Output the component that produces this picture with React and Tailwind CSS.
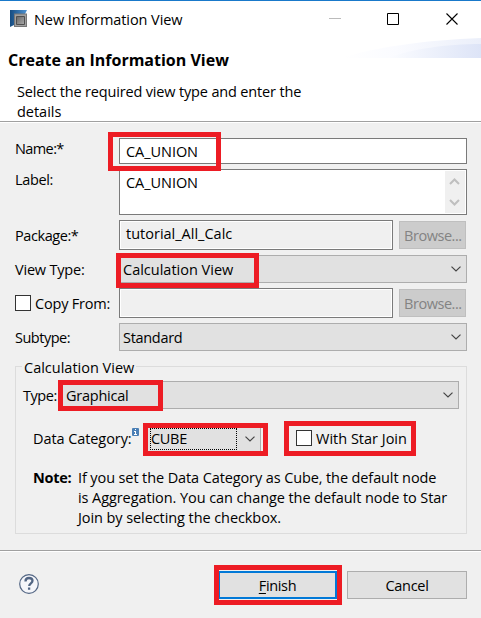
import React from "react";

function Text({ className = "", children }) {
  return (
    <span className={`block h-[20px] whitespace-pre leading-[22px] ${className}`}>{children}</span>
  );
}

function Chevron({ className = "" }) {
  return (
    <svg className={`shrink-0 ${className}`} width="10" height="6" viewBox="0 0 10 6" fill="none">
      <path d="M.5 .6 5 5 9.500 .6" stroke="#444" strokeWidth="1.2" />
    </svg>
  );
}

function Combo({ className = "", children }) {
  return (
    <div className={`flex h-[28px] items-center justify-between border border-[#adadad] bg-[#e1e1e1] pl-[3px] pr-[5px] ${className}`}>
      {children}
      <Chevron />
    </div>
  );
}

function Browse() {
  return (
    <div className="mt-px ml-[6px] h-[28px] w-[67px] border border-[#bfbfbf] bg-[#cccccc] pt-[3px] pl-[4px] text-[#838383]">
      <Text className="tracking-[-0.45px]">Browse...</Text>
    </div>
  );
}

function Highlight({ className }) {
  return <div className={`pointer-events-none absolute border-[5px] border-[#ed1c24] ${className}`} />;
}

function Label({ className = "", children }) {
  return (
    <div className={`w-[104px] shrink-0 ${className}`}>
      <Text>{children}</Text>
    </div>
  );
}

function Check() {
  return <span className="block size-[16px] shrink-0 border border-[#333] bg-white" />;
}

export default function App() {
  return (
    <div className="relative flex h-[618px] w-[481px] flex-col overflow-hidden bg-[#f0f0f0] font-['Open_Sans','Noto_Sans',sans-serif] text-[14.5px] text-black">
      <header className="h-[122px] border-t border-b border-t-[#1979ca] border-b-[#a0a0a0] bg-white">
        <div className="flex h-[37px] items-start">
          <svg className="mt-[9px] ml-[10px]" width="17" height="17" viewBox="0 0 17 17">
            <defs>
              <linearGradient id="blue" x1="0" y1="0" x2="1" y2="0">
                <stop offset="0" stopColor="#164c80" />
                <stop offset="1" stopColor="#4f94d4" />
              </linearGradient>
              <linearGradient id="metal" x1="0" y1="0" x2="1" y2="1">
                <stop offset="0" stopColor="#666" />
                <stop offset="1" stopColor="#aaa" />
              </linearGradient>
            </defs>
            <path d="M0 0h17l-2 4H4v11l-4 2Z" fill="url(#blue)" />
            <path d="M4 3.500h13V17H4Z" fill="#777" />
            <path d="M5 4.500h11V16H5Z" fill="#a0a0a0" />
            <path d="M6.500 6.500h8v8h-8Z" fill="url(#metal)" stroke="#505050" />
          </svg>
          <Text className="mt-[8px] ml-[7px] w-[295px] tracking-[-0.07px]">New Information View</Text>
          <svg className="mt-[12px]" width="130" height="12" viewBox="0 0 130 12" fill="none">
            <path d="M0 5.500h12" stroke="#bbb" />
            <path d="M58.500 .5h11v11h-11Z" stroke="#000" />
            <path d="m117.500 .5 11 11m0-11-11 11" stroke="#000" strokeWidth="1.100" />
          </svg>
        </div>
        <div className="relative h-[83px]">
          <svg className="absolute top-0 right-0" width="140" height="20" viewBox="0 0 140 20">
            <defs>
              <linearGradient id="outerWave">
                <stop offset="0" stopColor="#fff" />
                <stop offset=".4" stopColor="#fafbff" />
                <stop offset="1" stopColor="#ebeffa" />
              </linearGradient>
              <linearGradient id="innerWave">
                <stop offset="0" stopColor="#fbfcff" />
                <stop offset="1" stopColor="#dde4f7" />
              </linearGradient>
            </defs>
            <path d="M0 20C35 9 85 2 140 0v20Z" fill="url(#outerWave)" />
            <path d="M48 20C70 11 105 6 140 6v14Z" fill="url(#innerWave)" />
          </svg>
          <div className="relative pt-[11px] pl-[8px]">
            <Text className="text-[16px] font-bold">Create an Information View</Text>
            <div className="pt-[12px] pl-[9px]">
              <Text className="tracking-[-0.16px]">Select the required view type and enter the</Text>
              <Text className="tracking-[-0.02px]">details</Text>
            </div>
          </div>
        </div>
      </header>

      <main className="h-[428px] border-t border-t-white pt-[15px] pl-[15px]">
        <div className="flex h-[31px]">
          <Label className="tracking-[-0.6px]">Name:*</Label>
          <div className="h-[26px] w-[348px] border border-[#7a7a7a] bg-white pt-[2px] pl-[6px]">
            <Text className="tracking-[-0.05px]">CA_UNION</Text>
          </div>
        </div>
        <div className="flex h-[51px]">
          <Label className="tracking-[-0.35px]">Label:</Label>
          <div className="flex h-[46px] w-[348px] justify-between border border-[#7a7a7a] bg-white p-px">
            <Text className="pt-px pl-[5px] tracking-[-0.05px]">CA_UNION</Text>
            <svg className="bg-[#f0f0f0]" width="20" height="42" viewBox="0 0 20 42" fill="none" stroke="#bfbfbf" strokeWidth="2">
              <path d="m5 13 4.500-4.500L14 13M5 29l4.500 4.500L14 29" />
            </svg>
          </div>
        </div>
        <div className="flex h-[35px]">
          <Label className="pt-[5px] tracking-[-0.42px]">Package:*</Label>
          <div className="h-[30px] w-[274px] border border-[#7a7a7a] p-px">
            <div className="h-[26px] pt-px pl-[5px] outline outline-1 outline-white">
              <Text>tutorial_All_Calc</Text>
            </div>
          </div>
          <Browse />
        </div>
        <div className="flex h-[33px]">
          <Label className="pt-[4px] tracking-[-0.2px]">View Type:</Label>
          <Combo className="w-[348px]">
            <Text>Calculation View</Text>
          </Combo>
        </div>
        <div className="flex h-[35px]">
          <div className="flex w-[104px] shrink-0 pt-[7px]">
            <Check />
            <Text className="mt-[-2px] ml-[4px] tracking-[-0.2px]">Copy From:</Text>
          </div>
          <div className="h-[30px] w-[274px] border border-[#7a7a7a] p-px">
            <div className="h-[26px] outline outline-1 outline-white" />
          </div>
          <Browse />
        </div>
        <div className="flex h-[43px]">
          <Label className="pt-[4px] tracking-[-0.5px]">Subtype:</Label>
          <Combo className="w-[348px]">
            <Text className="tracking-[-0.3px]">Standard</Text>
          </Combo>
        </div>

        <section className="h-[168px] w-[452px] border border-[#dcdcdc] pl-[7px]">
          <div className="mt-[-10px] ml-[-1px] w-[114px] bg-[#f0f0f0] pl-[2px]">
            <Text>Calculation View</Text>
          </div>
          <div className="mt-[4px] flex">
            <Text className="w-[35px] pt-[4px] tracking-[-0.45px]">Type:</Text>
            <Combo className="w-[401px] pl-[7px]">
              <Text className="tracking-[-0.25px]">Graphical</Text>
            </Combo>
          </div>
          <div className="mt-[15px] flex h-[32px] pl-[10px]">
            <Text className="w-[99px] pt-[4px] tracking-[-0.08px]">Data Category:</Text>
            <svg className="mt-[4px]" width="7" height="8" viewBox="0 0 7 8">
              <rect width="7" height="8" rx="1" fill="#4a7fb5" />
              <path d="M3 1h1v1H3zM2 3h2v3h1v1H2V6h1V4H2z" fill="#fff" />
            </svg>
            <div className="ml-[8px] flex h-[30px] w-[114px] items-center border-r border-[#adadad] bg-[#e1e1e1] pl-[3px]">
              <div className="h-[22px] w-[87px] border border-dotted border-black">
                <Text className="mt-[-1px] tracking-[-0.3px]">CUBE</Text>
              </div>
              <Chevron className="ml-[8px]" />
            </div>
            <div className="flex pt-[6px] pl-[35px]">
              <Check />
              <Text className="mt-[-2px] ml-[4px]">With Star Join</Text>
            </div>
          </div>
          <div className="mt-[11px] flex pl-[10px]">
            <Text className="w-[45px] font-bold tracking-[-0.3px]">Note:</Text>
            <div>
              <Text className="tracking-[-0.11px]">If you set the Data Category as Cube, the default node</Text>
              <Text className="tracking-[-0.08px]">is Aggregation. You can change the default node to Star</Text>
              <Text className="tracking-[-0.08px]">Join by selecting the checkbox.</Text>
            </div>
          </div>
        </section>
      </main>

      <footer className="flex h-[68px] border-t border-t-[#a0a0a0] shadow-[inset_0_1px_0_white]">
        <svg className="mt-[23px] ml-[19px] shrink-0" width="20" height="20" viewBox="0 0 20 20" fill="none" stroke="#536684">
          <circle cx="10" cy="10" r="9.300" fill="#f5f6fa" strokeWidth="1.200" />
          <path d="M6.500 7.500c0-2.500 1.500-3.500 3.500-3.500s3.500 1 3.500 2.800c0 2.500-3.300 2.500-3.300 5.200M10.100 13.500v2.200" strokeWidth="2.300" />
        </svg>
        <button className="mt-[20px] ml-[179px] h-[28px] w-[119px] border-2 border-[#0078d7] bg-[#e1e1e1]">
          <Text className="tracking-[-0.35px]"><span className="underline underline-offset-2">F</span>inish</Text>
        </button>
        <button className="mt-[20px] ml-[10px] h-[28px] w-[120px] border border-[#adadad] bg-[#e1e1e1]">
          <Text className="tracking-[-0.3px]">Cancel</Text>
        </button>
      </footer>

      <Highlight className="top-[132px] left-[108px] h-[39px] w-[113px]" />
      <Highlight className="top-[253px] left-[116px] h-[35px] w-[143px]" />
      <Highlight className="top-[380px] left-[58px] h-[31px] w-[105px]" />
      <Highlight className="top-[423px] left-[143px] h-[33px] w-[125px]" />
      <Highlight className="top-[421px] left-[284px] h-[35px] w-[132px]" />
      <Highlight className="top-[565px] left-[214px] h-[40px] w-[128px]" />
    </div>
  );
}
